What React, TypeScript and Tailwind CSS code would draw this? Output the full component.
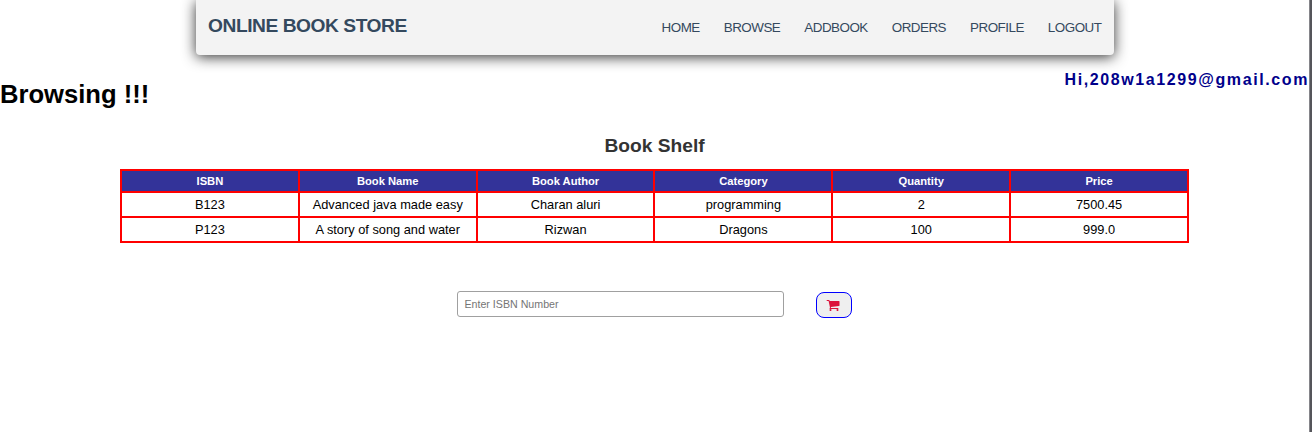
const links = ['HOME', 'BROWSE', 'ADDBOOK', 'ORDERS', 'PROFILE', 'LOGOUT'];
const columns = ['ISBN', 'Book Name', 'Book Author', 'Category', 'Quantity', 'Price'];
const books = [
  ['B123', 'Advanced java made easy', 'Charan aluri', 'programming', '2', '7500.45'],
  ['P123', 'A story of song and water', 'Rizwan', 'Dragons', '100', '999.0'],
];

function CartIcon() {
  return (
    <svg viewBox="0 0 1792 1792" className="mr-[2px] size-[14px] fill-[#dc143c]" aria-hidden="true">
      <path d="M704 1536q0 52-38 90t-90 38-90-38-38-90 38-90 90-38 90 38 38 90zm896 0q0 52-38 90t-90 38-90-38-38-90 38-90 90-38 90 38 38 90zm128-1088v512q0 24-16.5 42.5t-40.5 21.5l-1044 122q13 60 13 70 0 16-24 64h920q26 0 45 19t19 45-19 45-45 19h-1024q-26 0-45-19t-19-45q0-11 8-31.5t16-36 21.5-40 15.5-29.5l-177-823h-204q-26 0-45-19t-19-45 19-45 45-19h256q16 0 28.5 6.5t19.5 15.5 13 24.5 8 26 5.5 29.5 4.5 26h1201q26 0 45 19t19 45z" />
    </svg>
  );
}

export default function App() {
  return (
    <div className="flex h-[432px] w-[1312px] overflow-hidden bg-white font-['Liberation_Sans',Arial,sans-serif] text-black">
      <div className="flex w-[1309px] shrink-0 flex-col">
        <nav className="ml-[196px] flex h-[55px] w-[918px] shrink-0 justify-between rounded-b-[4px] bg-[#f3f3f3] pr-[12.6px] pl-3 shadow-[0_2px_14px_0_#333]">
          <div className="pt-[14px] text-[19.2px] leading-6 font-bold tracking-[-0.45px] whitespace-nowrap text-[#34495e]">
            ONLINE BOOK STORE
          </div>
          <ul className="flex gap-6 pt-[18px] text-[13.4px] leading-5 tracking-[-0.5px] text-[#34495e]">
            {links.map((link) => (
              <li key={link}>
                <a href="#">{link}</a>
              </li>
            ))}
          </ul>
        </nav>

        <div className="flex h-[78px] shrink-0 justify-between whitespace-nowrap">
          <h1 className="pt-[24px] text-[25.6px] leading-[30px] font-bold">Browsing !!!</h1>
          <p className="pt-[15px] text-[16px] leading-5 font-bold tracking-[1.6px] text-[#00008b]">
            Hi,208w1a1299@gmail.com
          </p>
        </div>

        <h2 className="h-9 shrink-0 pt-px text-center text-[19.2px] leading-6 font-bold text-[#333]">Book Shelf</h2>

        <table className="ml-[120px] w-[1069px] table-fixed border-collapse text-center">
          <thead>
            <tr className="h-[22px] bg-[#333399] text-[11.2px] leading-[14px] text-white">
              {columns.map((column) => (
                <th key={column} className="border-2 border-[#ff0000] p-0 font-bold">
                  {column}
                </th>
              ))}
            </tr>
          </thead>
          <tbody>
            {books.map((book) => (
              <tr key={book[0]} className="h-[25px] text-[12.8px] leading-[15px]">
                {book.map((value) => (
                  <td key={value} className="border-2 border-[#ff0000] p-0">
                    {value}
                  </td>
                ))}
              </tr>
            ))}
          </tbody>
        </table>

        <form className="mt-12 ml-[457px] flex items-start gap-8">
          <input
            type="text"
            placeholder="Enter ISBN Number"
            className="h-[26px] w-[327px] rounded-[3px] border border-[#a0a0a0] bg-white px-[6.4px] text-[10.67px] placeholder:text-[#757575]"
          />
          <button
            type="button"
            aria-label="Add to cart"
            className="mt-px flex h-[26px] w-9 items-center justify-center rounded-[8px] border border-[#0000ff] bg-[#efefef]"
          >
            <CartIcon />
          </button>
        </form>
      </div>
      <div className="h-full w-[3px] shrink-0 border-l border-[#85858a] bg-[#55555a]" />
    </div>
  );
}
